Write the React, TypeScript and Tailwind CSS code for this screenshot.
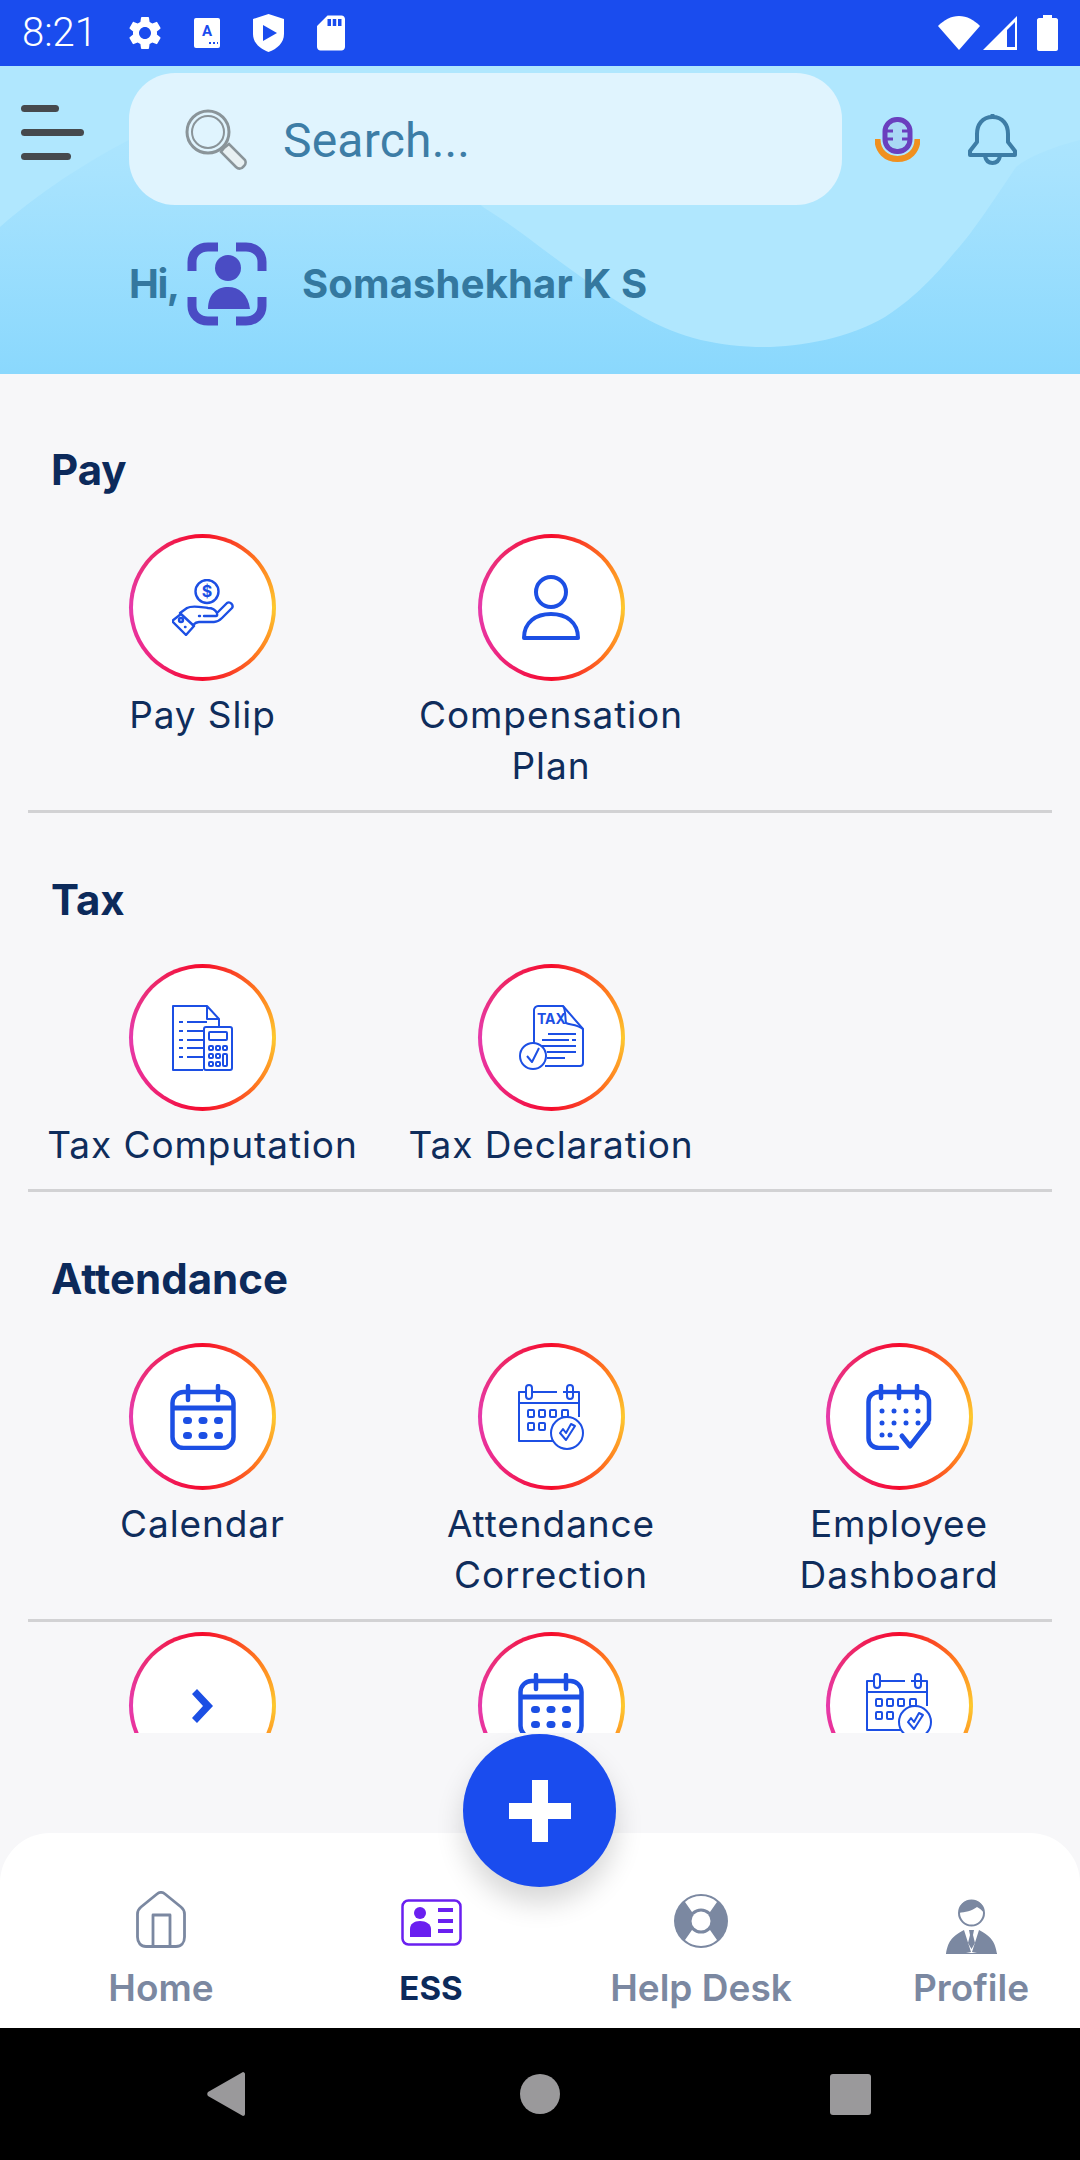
import type { ReactNode } from 'react';
import { MdSettings, MdSdCard } from 'react-icons/md';

const BLUE = '#1c4fe4';
const GREY = '#7b88a1';

function Hand() {
    return (
        <svg width="62" height="57" viewBox="0 0 62 57" fill="none" stroke={BLUE} strokeWidth="2.4" strokeLinejoin="round" strokeLinecap="round">
            <circle cx="35" cy="12.5" r="11.5" />
            <text x="35" y="18" textAnchor="middle" fontSize="16" fontWeight="700" fill={BLUE} stroke="none" fontFamily="Inter, sans-serif">$</text>
            <path d="M0 42 9 35 22 47 14 56Z" />
            <path d="M8 34 15 29C20 26 28 28 36 29 41 29 44 32 45 34L55 24C58 22 62 26 60 29L50 39C47 42 45 43 42 43H27C25 43 23 44 21 46" />
            <path d="M32 37H44C45 37 45.500 36 45 35" />
            <path d="M27 37H28" />
            <circle cx="9" cy="41" r="2" />
            <path d="M13 48H13.500" />
        </svg>
    );
}

function Person() {
    return (
        <svg width="58" height="65" viewBox="0 0 58 65" fill="none" stroke={BLUE} strokeWidth="4" strokeLinejoin="round">
            <circle cx="29" cy="17" r="15" />
            <path d="M2 63C2 47 14 39 29 39S56 47 56 63Z" />
        </svg>
    );
}

function TaxCalc() {
    return (
        <svg width="61" height="66" viewBox="0 0 61 66" fill="none" stroke={BLUE} strokeWidth="2" strokeLinejoin="round">
            <path d="M31 65H1V1H35L47 14V22M35 1V14H47" />
            <path d="M7 17H11M15 17H35M7 26H11M15 26H31M7 35H11M15 35H31M7 43H11M15 43H31M7 52H11M15 52H31" />
            <rect x="32" y="22" width="28" height="43" rx="2" />
            <rect x="37" y="27" width="18" height="8" rx="1" />
            <rect x="37" y="41" width="4" height="4" rx="1" />
            <rect x="44" y="41" width="4" height="4" rx="1" />
            <rect x="51" y="41" width="4" height="4" rx="1" />
            <rect x="37" y="49" width="4" height="4" rx="1" />
            <rect x="44" y="49" width="4" height="4" rx="1" />
            <rect x="37" y="57" width="4" height="4" rx="1" />
            <rect x="44" y="57" width="4" height="4" rx="1" />
            <rect x="51" y="49" width="4" height="12" rx="1" />
        </svg>
    );
}

function TaxDoc() {
    return (
        <svg width="65" height="66" viewBox="0 0 65 66" fill="none" stroke={BLUE} strokeWidth="2" strokeLinejoin="round">
            <path d="M15 38V5C15 3 17 1 19 1H44L64 24V58C64 60 63 61 61 61H26" />
            <path d="M44 1C47 5 46 13 47 18 51 20 58 19 64 24" />
            <text x="18" y="19" fontSize="14" fontWeight="700" fill={BLUE} stroke="none" fontFamily="Inter, sans-serif">TAX</text>
            <path d="M29 29H57M23 35H50M53 35H57M23 41H57M28 47H57M28 53H46" />
            <circle cx="14" cy="51" r="13" fill="#fff" />
            <path d="M8 51 13 57 20 43" />
        </svg>
    );
}

function CalBold() {
    return (
        <svg width="66" height="66" viewBox="0 0 66 66" fill="none" stroke={BLUE} strokeWidth="4.5" strokeLinecap="round">
            <rect x="2.500" y="8" width="61" height="56" rx="11" />
            <path d="M18 2V16M48 2V16" />
            <path d="M3 24H63" strokeWidth="5" strokeLinecap="butt" />
            <g fill={BLUE} stroke="none">
                <rect x="13" y="33" width="9" height="7" rx="3.500" />
                <rect x="28.500" y="33" width="9" height="7" rx="3.500" />
                <rect x="44" y="33" width="9" height="7" rx="3.500" />
                <rect x="13" y="48" width="9" height="7" rx="3.500" />
                <rect x="28.500" y="48" width="9" height="7" rx="3.500" />
                <rect x="44" y="48" width="9" height="7" rx="3.500" />
            </g>
        </svg>
    );
}

function CalCheck() {
    return (
        <svg width="66" height="66" viewBox="0 0 66 66" fill="none" stroke={BLUE} strokeWidth="2" strokeLinejoin="round">
            <path d="M8 8H1V57H40M45 8H61V33" />
            <path d="M14 8H39" />
            <path d="M1 19H61" />
            <rect x="8" y="1" width="6" height="14" rx="3" />
            <rect x="49" y="1" width="6" height="14" rx="3" />
            <rect x="10" y="26" width="6" height="7" rx="1" />
            <rect x="21" y="26" width="6" height="7" rx="1" />
            <rect x="32" y="26" width="6" height="7" rx="1" />
            <rect x="44" y="26" width="6" height="7" rx="1" />
            <rect x="10" y="39" width="6" height="7" rx="1" />
            <rect x="21" y="39" width="6" height="7" rx="1" />
            <circle cx="49" cy="49" r="16" fill="#fff" />
            <path d="M42 49 48 56 57 42 53 40 48 49 45 45Z" />
        </svg>
    );
}

function CalDots() {
    return (
        <svg width="66" height="66" viewBox="0 0 66 66" fill="none" stroke={BLUE} strokeWidth="4.500" strokeLinecap="round" strokeLinejoin="round">
            <path d="M63 36V18C63 12 59 8 53 8H13C7 8 2.500 12 2.500 18V54C2.500 60 7 64 13 64H31" />
            <path d="M15 2V14M33 2V14M51 2V14" />
            <path d="M36 52 44 62 62 39" strokeWidth="5" />
            <g fill={BLUE} stroke="none">
                <circle cx="16" cy="27" r="2.500" />
                <circle cx="28" cy="27" r="2.500" />
                <circle cx="40" cy="27" r="2.500" />
                <circle cx="52" cy="27" r="2.500" />
                <circle cx="16" cy="39" r="2.500" />
                <circle cx="28" cy="39" r="2.500" />
                <circle cx="40" cy="39" r="2.500" />
                <circle cx="52" cy="39" r="2.500" />
                <circle cx="16" cy="51" r="2.500" />
                <circle cx="24" cy="51" r="2.500" />
            </g>
        </svg>
    );
}

function Chevron() {
    return (
        <svg width="21" height="34" viewBox="0 0 21 34" fill={BLUE}>
            <path d="M5 0 21 17 5 34 0 29 11 17 0 5Z" />
        </svg>
    );
}

type Item = { label: ReactNode; icon: ReactNode };

function Tile({ label, icon }: Item) {
    return (
        <div className="flex flex-col items-center">
            <div className="h-[147px] w-[147px] rounded-full bg-[conic-gradient(#f50a2c,#ff7a1e_50deg,#fdc92f_90deg,#ff7a1e_130deg,#f50a2c_180deg,#ec2a8c_235deg,#e63bab_270deg,#ec2a70_315deg,#f50a2c)] p-[4px]">
                <div className="flex h-full w-full items-center justify-center rounded-full bg-white">{icon}</div>
            </div>
            <div className="mt-[8px] text-center text-[37px] leading-[51px] tracking-[0.9px] whitespace-nowrap text-[#0f2d5c]">{label}</div>
        </div>
    );
}

function Section({ title, items, first }: { title: string; items: Item[]; first?: boolean }) {
    return (
        <section>
            <div className={first ? 'pt-[66px]' : 'pt-[57px]'}>
                <h2 className="pl-[51px] text-[42px] leading-[60px] font-bold text-[#0c2a5b]">{title}</h2>
                <div className="mt-[34px] grid grid-cols-[349px_348px_348px] pl-[28px]">
                    {items.map((item, i) => <Tile key={i} {...item} />)}
                </div>
            </div>
            <div className="mx-[28px] mt-[19px] h-[3px] bg-[#d2d2d4]" />
        </section>
    );
}

function StatusBar() {
    return (
        <div className="flex h-[66px] items-center bg-[#1a4cee] text-white [font-family:Roboto,sans-serif]">
            <span className="ml-[22px] w-[68px] text-[40px] leading-none font-light">8:21</span>
            <MdSettings className="ml-[35px] h-[40px] w-[40px]" />
            <svg className="ml-[29px]" width="26" height="30" viewBox="0 0 26 30">
                <rect width="26" height="30" rx="2" fill="#fff" />
                <text x="13" y="18" textAnchor="middle" fontSize="15" fontWeight="700" fill="#1a4cee" fontFamily="Roboto, sans-serif">A</text>
                <path d="M15 25H17M19 25H21M23 25H24" stroke="#1a4cee" strokeWidth="2" />
            </svg>
            <svg className="ml-[33px]" width="31" height="38" viewBox="0 0 31 38">
                <path d="M15.500 0 31 5V20C31 29 24 35 15.500 38 7 35 0 29 0 20V5Z" fill="#fff" />
                <path d="M10 11 24 19 10 27Z" fill="#1a4cee" />
            </svg>
            <MdSdCard className="-mx-[5px] ml-[26px] h-[42px] w-[42px]" />
            <div className="flex-1" />
            <svg width="42" height="34" viewBox="0 0 42 34" fill="#fff">
                <path d="M21 34 0 10C6 4 13 0 21 0S36 4 42 10Z" />
            </svg>
            <svg className="ml-[3px]" width="34" height="34" viewBox="0 0 34 34" fill="#fff">
                <path fillRule="evenodd" d="M34 0V34H0ZM32 6 24 14V31H32Z" />
            </svg>
            <svg className="mr-[22px] ml-[20px]" width="21" height="36" viewBox="0 0 21 36" fill="#fff">
                <path d="M6 0H15V3H19C20 3 21 4 21 5V34C21 35 20 36 19 36H2C1 36 0 35 0 34V5C0 4 1 3 2 3H6Z" />
            </svg>
        </div>
    );
}

function Header() {
    return (
        <header className="relative h-[308px] overflow-hidden bg-[linear-gradient(#b2e8fe,#a8e3fe_35%,#8ad8fd)]">
            <svg className="absolute inset-0" width="1080" height="308" viewBox="0 0 1080 308">
                <path d="M0 0H1080V74C1050 82 1030 90 1016 101 990 140 970 170 954 187 925 222 905 238 885 251 850 272 800 281 764 281 720 281 680 272 643 251 600 226 570 203 540 181 520 165 500 152 483 141 400 60 300 40 129 74 70 105 30 135 0 161Z" fill="#b0e7fe" />
            </svg>
            <div className="relative flex flex-col">
                <div className="mt-[7px] flex h-[132px] items-center">
                    <div className="mb-[14px] ml-[21px] flex w-[63px] flex-col gap-[17px]">
                        <div className="h-[7px] w-[38px] rounded-full bg-[#46494d]" />
                        <div className="h-[7px] w-[63px] rounded-full bg-[#46494d]" />
                        <div className="h-[7px] w-[50px] rounded-full bg-[#46494d]" />
                    </div>
                    <div className="ml-[45px] flex h-[132px] w-[713px] items-center rounded-[46px] bg-[#e0f4fe]">
                        <svg className="ml-[55px]" width="63" height="62" viewBox="0 0 63 62" fill="none">
                            <circle cx="24" cy="24" r="21" stroke="#8a9499" strokeWidth="3" />
                            <circle cx="24" cy="24" r="16" stroke="#8a9499" strokeWidth="2" />
                            <path d="M40 40 45 36 61 52C62 54 62 56 60 58L58 60C56 61 54 61 52 59L37 44Z" fill="#e8f0f2" stroke="#8a9499" strokeWidth="2.500" />
                        </svg>
                        <span className="mt-[4px] ml-[36px] text-[48px] leading-none tracking-[0.2px] text-[#3d7da6] [font-family:Roboto,sans-serif]">Search...</span>
                    </div>
                    <svg className="ml-[33px]" width="45" height="45" viewBox="0 0 45 45" fill="none">
                        <path d="M2.500 22C2.500 34 11 42 22.500 42S42.500 34 42.500 22" stroke="#f0901f" strokeWidth="6" />
                        <rect x="10" y="2.500" width="25" height="32" rx="12" stroke="#6a3fbe" strokeWidth="5" fill="#a9d8f5" />
                        <path d="M11 14H18M27 14H34M11 22H18M27 22H34" stroke="#6a3fbe" strokeWidth="3" />
                    </svg>
                    <svg className="ml-[48px]" width="49" height="51" viewBox="0 0 49 51" fill="none" stroke="#3d7da6" strokeWidth="4" strokeLinejoin="round">
                        <path d="M24.500 3C14 3 9 11 9 20V28L2 37V41H47V37L40 28V20C40 11 35 3 24.500 3Z" />
                        <path d="M24.500 1V3" strokeLinecap="round" />
                        <path d="M17 42C18 47 21 49 24.500 49S31 47 32 42" />
                    </svg>
                </div>
                <div className="mt-[37px] flex h-[84px] items-center pl-[129px] text-[40px] font-bold text-[#34789f] [font-family:Inter,sans-serif]">
                    <span className="w-[58px] tracking-[-1.5px]">Hi,</span>
                    <svg width="80" height="84" viewBox="0 0 80 84" fill="none">
                        <g stroke="#4a4cc4" strokeWidth="9">
                            <path d="M5 29V20C5 11 12 5 21 5H31" />
                            <path d="M49 5H59C68 5 75 11 75 20V29" />
                            <path d="M5 55V64C5 73 12 79 21 79H31" />
                            <path d="M49 79H59C68 79 75 73 75 64V55" />
                        </g>
                        <circle cx="41" cy="26" r="13" fill="#4a4cc4" />
                        <path d="M21 67C21 52 30 45 41 45S61 52 63 67Z" fill="#4a4cc4" />
                    </svg>
                    <span className="ml-[35px] tracking-[0.15px] whitespace-nowrap">Somashekhar K S</span>
                </div>
            </div>
        </header>
    );
}

function NavItem({ icon, label, active }: { icon: ReactNode; label: string; active?: boolean }) {
    return (
        <div className="flex flex-col items-center">
            <div className="flex h-[66px] items-end">{icon}</div>
            <span className={`mt-[8px] leading-[50px] whitespace-nowrap ${active ? 'text-[33px] font-bold text-[#0c2a5b]' : 'text-[37px] font-semibold text-[#7b88a1]'}`}>{label}</span>
        </div>
    );
}

export default function App() {
    return (
        <div className="relative flex h-[2160px] w-[1080px] flex-col overflow-hidden bg-[#f7f7f9] [font-family:Inter,sans-serif]">
            <StatusBar />
            <Header />

            <main className="h-[1359px] overflow-hidden">
                <Section first title="Pay" items={[
                    { label: 'Pay Slip', icon: <Hand /> },
                    { label: <>Compensation<br />Plan</>, icon: <Person /> },
                ]} />
                <Section title="Tax" items={[
                    { label: 'Tax Computation', icon: <TaxCalc /> },
                    { label: 'Tax Declaration', icon: <TaxDoc /> },
                ]} />
                <Section title="Attendance" items={[
                    { label: 'Calendar', icon: <CalBold /> },
                    { label: <>Attendance<br />Correction</>, icon: <CalCheck /> },
                    { label: <>Employee<br />Dashboard</>, icon: <CalDots /> },
                ]} />
                <div className="mt-[10px] grid grid-cols-[349px_348px_348px] pl-[28px]">
                    <Tile label="" icon={<Chevron />} />
                    <Tile label="" icon={<CalBold />} />
                    <Tile label="" icon={<CalCheck />} />
                </div>
            </main>

            <div className="flex-1" />

            <nav className="grid h-[195px] grid-cols-[270px_270px_270px_270px] rounded-t-[50px] bg-white pt-[56px] pl-[26px]">
                <NavItem label="Home" icon={
                    <svg className="mb-[7px]" width="50" height="57" viewBox="0 0 50 57" fill="none" stroke={GREY} strokeWidth="2.800" strokeLinejoin="round">
                        <path d="M5 16 21 3C23.500 1 26.500 1 29 3L45 16C47.500 18 48.500 20 48.500 23V46C48.500 52 45 55.500 40 55.500H10C5 55.500 1.500 52 1.500 46V23C1.500 20 2.500 18 5 16Z" />
                        <path d="M17 55V24H34V55" />
                    </svg>
                } />
                <NavItem active label="ESS" icon={
                    <svg className="mb-[9px]" width="61" height="47" viewBox="0 0 61 47" fill="none" stroke="#6a1ff0" strokeWidth="2.500">
                        <rect x="1.500" y="1.500" width="58" height="44" rx="6" />
                        <g fill="#6a1ff0" stroke="none">
                            <circle cx="19" cy="14" r="6" />
                            <path d="M9 38V30C9 25 13 22 19 22S30 25 30 30V38Z" />
                            <rect x="37" y="9" width="15" height="4" />
                            <rect x="37" y="20" width="15" height="4" />
                            <rect x="37" y="30" width="15" height="4" />
                        </g>
                    </svg>
                } />
                <NavItem label="Help Desk" icon={
                    <svg className="mb-[7px]" width="54" height="54" viewBox="0 0 54 54">
                        <circle cx="27" cy="27" r="27" fill={GREY} />
                        <path d="M18 18 11 8A24.500 24.500 0 0 1 43 8L36 18A13 13 0 0 0 18 18ZM18 36 11 46A24.500 24.500 0 0 0 43 46L36 36A13 13 0 0 1 18 36Z" fill="#fff" />
                        <circle cx="27" cy="27" r="9.500" fill="#fff" />
                    </svg>
                } />
                <NavItem label="Profile" icon={
                    <svg className="mb-[1px]" width="51" height="55" viewBox="0 0 51 55">
                        <circle cx="25.500" cy="14" r="12.500" fill="#fff" stroke={GREY} strokeWidth="2" />
                        <path d="M13 14C13 5 19 1 25.500 1 33 1 38 6 38 14 36 11 33 9 31 8 26 12 19 13 13 14Z" fill={GREY} />
                        <path d="M0 55C2 43 5 38 18 31L25 53 15 55ZM51 55C49 43 46 38 33 31L26 53 36 55Z" fill={GREY} />
                        <path d="M0 55H51V54H0Z" fill={GREY} />
                        <path d="M23 31H28L27 36 29 44 25.500 50 22 44 24 36Z" fill={GREY} />
                    </svg>
                } />
            </nav>

            <div className="flex h-[132px] items-center bg-black pl-[207px]">
                <svg width="38" height="44" viewBox="0 0 38 44" fill="#9a999b"><path d="M36 0C37 0 38 1 38 2V42C38 43 37 44 36 44L1 24C0 23 0 21 1 20Z" /></svg>
                <div className="ml-[275px] h-[40px] w-[40px] rounded-full bg-[#9a999b]" />
                <div className="ml-[270px] h-[41px] w-[41px] rounded-[3px] bg-[#9a999b]" />
            </div>

            {/* fab sits over the nav */}
            <button className="absolute top-[1734px] left-[463px] flex h-[153px] w-[153px] items-center justify-center rounded-full bg-[#1a4cee] shadow-[0_16px_28px_rgba(0,0,0,0.16)]">
                <svg width="62" height="62" viewBox="0 0 62 62" fill="#fff"><path d="M23 0H39V23H62V39H39V62H23V39H0V23H23Z" /></svg>
            </button>
        </div>
    );
}
